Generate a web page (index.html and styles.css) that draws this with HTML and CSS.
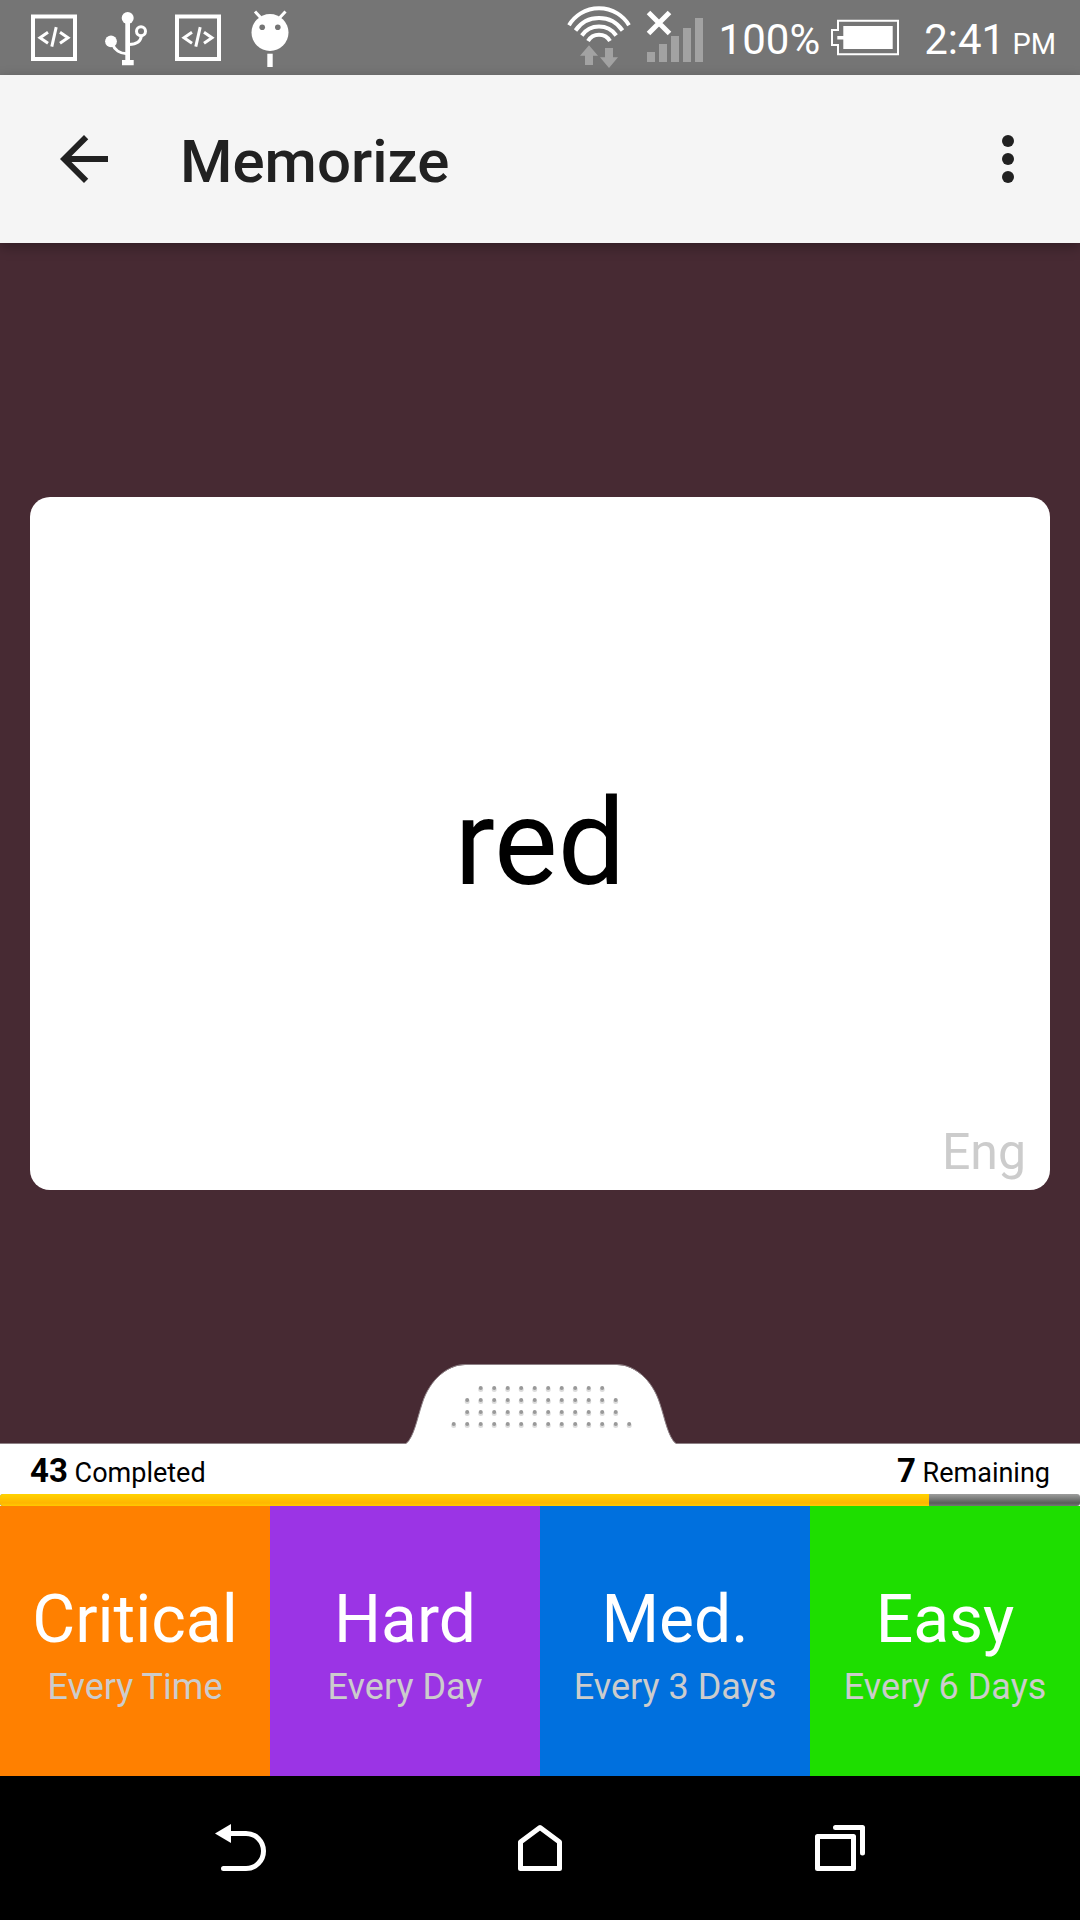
FILE: index.html
```html
<!DOCTYPE html>
<html lang="en">
<head>
<meta charset="utf-8">
<meta name="viewport" content="width=device-width, initial-scale=1">
<title>Memorize</title>
<link rel="stylesheet" href="styles.css">
</head>
<body>
<div class="screen">
  <div class="status">
    <div class="status-group">
      <svg class="notice" viewBox="0 0 72 75" aria-hidden="true"><g fill="none" stroke="#fff"><rect x="15" y="16.5" width="42" height="42.5" stroke-width="4"/><path d="M30 32.2l-8 5.5 8 5.5M42 32.2l8 5.5-8 5.5M38.2 27.2L33.8 46.7" stroke-width="3"/></g></svg>
      <svg class="notice" viewBox="0 0 72 75" aria-hidden="true"><g fill="#fff"><circle cx="37.7" cy="18" r="6"/><circle cx="21" cy="41.3" r="5.9"/><path d="M35.3 18h4.7v42h3.7v5.2H32V60h3.3z"/></g><g fill="none" stroke="#fff" stroke-width="3"><circle cx="51" cy="31.3" r="4.5"/><path d="M22.5 44C24.5 50 30 53.7 37 53.7M51.5 35C51 41 46.5 44.5 39 44.5"/></g></svg>
      <svg class="notice" viewBox="0 0 72 75" aria-hidden="true"><g fill="none" stroke="#fff"><rect x="15" y="16.5" width="42" height="42.5" stroke-width="4"/><path d="M30 32.2l-8 5.5 8 5.5M42 32.2l8 5.5-8 5.5M38.2 27.2L33.8 46.7" stroke-width="3"/></g></svg>
      <svg class="notice" viewBox="0 0 72 75" aria-hidden="true"><circle cx="36" cy="32.5" r="18.5" fill="#fff"/><path d="M21 11.5l7 7.5M51.5 11.5l-7 7.5" stroke="#fff" stroke-width="3"/><path d="M33.3 53.7h5.400V67h-5.400z" fill="#fff"/><g fill="#757575"><circle cx="28.2" cy="27.3" r="2.8"/><circle cx="43.8" cy="27.3" r="2.8"/></g></svg>
    </div>
    <div class="status-group">
      <svg class="wifi" viewBox="564 0 68 75" aria-hidden="true"><g fill="none" stroke="#fff" stroke-width="4"><path d="M568 25.2a35 35 0 0 1 60 0M574.5 30.5a28.500 28.500 0 0 1 47 0M580.8 35.5a21 21 0 0 1 34.400 0M587 41a12.800 12.800 0 0 1 22 0"/></g><path d="M588 45.3l9 10.400h-5V65h-8v-9.300h-5zM608 68l-9-10.700h5V48h8v9.300h5z" fill="#a2a2a2"/></svg>
      <svg class="signal" viewBox="640 0 68 75" aria-hidden="true"><path d="M646 52h8v10h-8zM658 44h8v18h-8zM670 36h8v26h-8zM682 28h8v34h-8zM694 18h8v44h-8z" fill="#a2a2a2"/><path d="M647.5 12.5l21 21M668.5 12.5l-21 21" stroke="#fff" stroke-width="5"/></svg>
      <span class="charge">100%</span>
      <svg class="battery" viewBox="828 0 74 75" aria-hidden="true"><path d="M838 20.8H898V54.3H838V45H832V30H838Z" fill="none" stroke="#fff" stroke-width="2"/><path d="M843.3 26h49.400v23h-49.400v-9.500h-6V36h6z" fill="#fff"/></svg>
      <time class="clock">2:41<small class="meridiem"> PM</small></time>
    </div>
  </div>

  <header class="appbar">
    <button class="icon-button back" type="button" aria-label="Back"><svg class="icon" viewBox="0 0 24 24"><path d="M20 11H7.830l5.590-5.590L12 4l-8 8 8 8 1.410-1.410L7.830 13H20z" fill="#212121"/></svg></button>
    <h1 class="title">Memorize</h1>
    <button class="icon-button more" type="button" aria-label="More options"><svg class="icon" viewBox="0 0 24 24" fill="#212121"><circle cx="12" cy="6" r="2"/><circle cx="12" cy="12" r="2"/><circle cx="12" cy="18" r="2"/></svg></button>
  </header>

  <main class="stage">
    <article class="card">
      <p class="word">red</p>
      <span class="language">Eng</span>
    </article>
  </main>

  <section class="drawer">
    <button class="handle" type="button" aria-label="Drag to expand">
      <svg class="handle-shape" viewBox="0 0 270 80">
        <path d="M0 80C8 73 11 55 16 40C24 14 43 1 59 1H211C227 1 246 14 254 40C259 55 262 73 270 80Z" fill="#fff"/>
        <path d="M0 79.5C8 73 11 55 16 40C24 14 43 .5 59 .5H211C227 .5 246 14 254 40C259 55 262 73 270 79.5" fill="none" stroke="#8d8085"/>
        <g fill="none" stroke-linecap="round" stroke-dasharray="0 13.5">
          <path d="M74.7 25.5h122M61.2 37.5h149M61.2 49.5h149M47.700 61.5h176.500" stroke="#dcdcdc" stroke-width="5"/>
          <path d="M74.7 24h122M61.2 36h149M61.2 48h149M47.700 60h176.500" stroke="#999" stroke-width="4"/>
        </g>
      </svg>
    </button>
    <div class="counts">
      <span><b class="number">43</b> Completed</span>
      <span><b class="number">7</b> Remaining</span>
    </div>
    <progress class="progress" value="43" max="50" aria-label="Cards completed"></progress>
    <div class="ratings">
      <button class="rating critical" type="button"><span class="level">Critical</span><span class="interval">Every Time</span></button>
      <button class="rating hard" type="button"><span class="level">Hard</span><span class="interval">Every Day</span></button>
      <button class="rating medium" type="button"><span class="level">Med.</span><span class="interval">Every 3 Days</span></button>
      <button class="rating easy" type="button"><span class="level">Easy</span><span class="interval">Every 6 Days</span></button>
    </div>
  </section>

  <nav class="navbar" aria-label="System">
    <button class="nav-button" type="button" aria-label="Back"><svg class="icon" viewBox="204 1812 72 72"><path d="M231 1824v19l-16-9.500z" fill="#fff"/><path d="M229 1833.500h17c10 0 17.500 8 17.500 17.500s-7.500 17.500-17.500 17.500h-22.500" fill="none" stroke="#fff" stroke-width="5" stroke-linecap="round"/></svg></button>
    <button class="nav-button" type="button" aria-label="Home"><svg class="icon" viewBox="504 1812 72 72"><path d="M520.500 1842L540 1827.500 559.500 1842V1868.500H520.500Z" fill="none" stroke="#fff" stroke-width="5" stroke-linejoin="round"/></svg></button>
    <button class="nav-button" type="button" aria-label="Recent apps"><svg class="icon" viewBox="804 1812 72 72"><path d="M817.500 1836.500h36v32h-36zM835.500 1827.500h27v25.500" fill="none" stroke="#fff" stroke-width="5" stroke-linejoin="round" stroke-linecap="round"/></svg></button>
  </nav>
</div>
</body>
</html>
```

FILE: styles.css
```css
* { box-sizing: border-box; }

body {
  margin: 0;
  font-family: Roboto, "Liberation Sans", sans-serif;
  color: #000;
}

button {
  margin: 0;
  padding: 0;
  border: 0;
  background: none;
  font: inherit;
  color: inherit;
  cursor: pointer;
}

svg { display: block; flex: none; }

.screen {
  display: flex;
  flex-direction: column;
  min-height: 100vh;
  background: #472a33;
}

/* System status bar */
.status {
  display: flex;
  justify-content: space-between;
  height: 75px;
  padding: 0 24px 0 18px;
  background: #757575;
  color: #fff;
  font-size: 42px;
  line-height: 80px;
}
.status-group { display: flex; }
.notice { width: 72px; height: 75px; }
.wifi { width: 68px; height: 75px; margin-right: 8px; }
.signal { width: 68px; height: 75px; margin-right: 10px; }
.charge { margin-right: 8px; }
.battery { width: 74px; height: 75px; margin-right: 22px; }
.meridiem { font-size: 29px; }

/* App bar */
.appbar {
  display: flex;
  align-items: center;
  height: 168px;
  background: #f5f5f5;
  color: #212121;
  box-shadow: 0 4px 12px rgba(0, 0, 0, 0.3);
}
.icon { width: 72px; height: 72px; }
.icon-button { display: flex; align-items: center; justify-content: center; height: 168px; }
.back { width: 168px; }
.more { width: 144px; }
.title {
  flex: 1;
  margin: 0;
  padding: 5px 0 0 12px;
  font-size: 60px;
  font-weight: 500;
  line-height: 72px;
}

/* Flash card */
.stage {
  flex: 1;
  display: flex;
  align-items: center;
  padding: 0 30px;
}
.card {
  position: relative;
  display: flex;
  align-items: center;
  justify-content: center;
  width: 100%;
  aspect-ratio: 1020 / 693;
  border-radius: 20px;
  background: #fff;
}
.word { margin: 0; font-size: 120px; line-height: 140px; }
.language {
  position: absolute;
  right: 24px;
  bottom: 8px;
  color: #ccc;
  font-size: 50px;
  line-height: 60px;
}

/* Drawer with counts and rating buttons */
.drawer { position: relative; background: #fff; border-top: 1px solid #8d8085; }
.handle {
  position: absolute;
  left: 50%;
  bottom: 100%;
  width: 270px;
  margin-left: -134px;
}
.handle-shape { width: 270px; height: 80px; }
.counts {
  display: flex;
  justify-content: space-between;
  height: 50px;
  padding: 4px 30px 0;
  font-size: 27px;
  line-height: 46px;
}
.number { font-size: 33px; font-weight: 700; }
.progress {
  display: block;
  width: 100%;
  height: 12px;
  border: 0;
  appearance: none;
}
.progress::-webkit-progress-bar {
  overflow: hidden;
  border-radius: 3px;
  background: linear-gradient(#9d9e9d, #5a5d5a 75%, #747674);
}
.progress::-webkit-progress-value {
  background: linear-gradient(#ffd300, #ffb600 75%, #ffcb00);
}
.ratings { display: grid; grid-template-columns: repeat(4, 1fr); }
.rating {
  display: flex;
  flex-direction: column;
  align-items: center;
  justify-content: center;
  gap: 7px;
  aspect-ratio: 1;
  padding-top: 7px;
}
.level { color: #fff; font-size: 66px; line-height: 78px; }
.interval { color: #ccc; font-size: 36px; line-height: 42px; }
.critical { background: #ff8000; }
.hard { background: #9b34e5; }
.medium { background: #0070de; }
.easy { background: #1ede00; }

/* System navigation */
.navbar {
  display: flex;
  align-items: center;
  justify-content: center;
  gap: 228px;
  height: 144px;
  background: #000;
}
.nav-button { width: 72px; height: 72px; }
```
